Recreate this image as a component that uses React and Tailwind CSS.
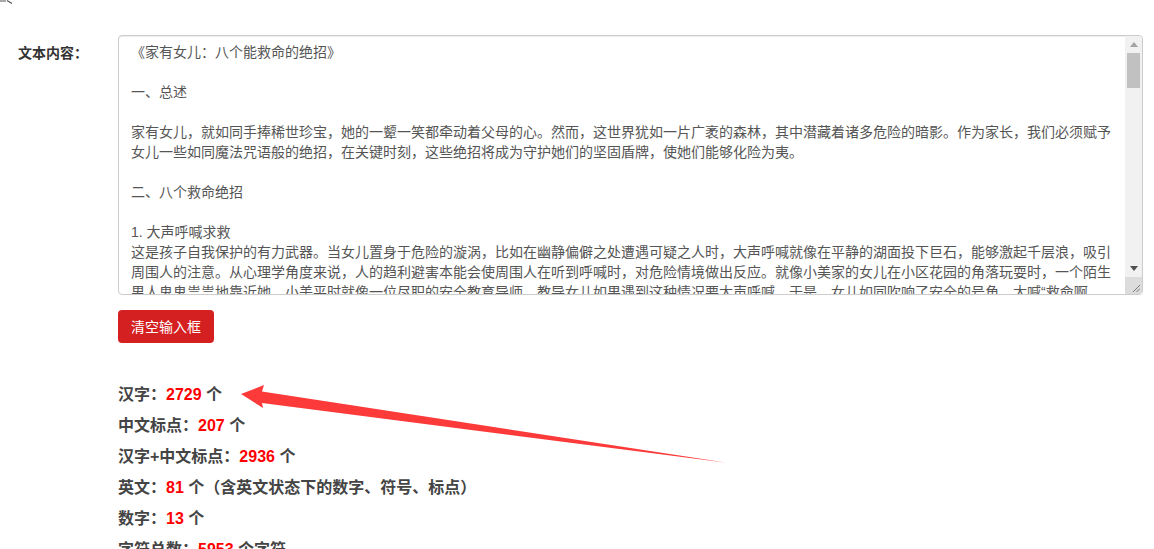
import React from "react";

const textLines = [
  "《家有女儿：八个能救命的绝招》",
  "",
  "一、总述",
  "",
  "家有女儿，就如同手捧稀世珍宝，她的一颦一笑都牵动着父母的心。然而，这世界犹如一片广袤的森林，其中潜藏着诸多危险的暗影。作为家长，我们必须赋予",
  "女儿一些如同魔法咒语般的绝招，在关键时刻，这些绝招将成为守护她们的坚固盾牌，使她们能够化险为夷。",
  "",
  "二、八个救命绝招",
  "",
  "1. 大声呼喊求救",
  "这是孩子自我保护的有力武器。当女儿置身于危险的漩涡，比如在幽静偏僻之处遭遇可疑之人时，大声呼喊就像在平静的湖面投下巨石，能够激起千层浪，吸引",
  "周围人的注意。从心理学角度来说，人的趋利避害本能会使周围人在听到呼喊时，对危险情境做出反应。就像小美家的女儿在小区花园的角落玩耍时，一个陌生",
  "男人鬼鬼祟祟地靠近她。小美平时就像一位尽职的安全教育导师，教导女儿如果遇到这种情况要大声呼喊。于是，女儿如同吹响了安全的号角，大喊“救命啊",
];

const stats = [
  ["汉字：", "2729", " 个"],
  ["中文标点：", "207", " 个"],
  ["汉字+中文标点：", "2936", " 个"],
  ["英文：", "81", " 个（含英文状态下的数字、符号、标点）"],
  ["数字：", "13", " 个"],
  ["字符总数：", "5953", " 个字符"],
];

export default function App() {
  return (
    <div
      className="relative w-[1154px] h-[549px] overflow-hidden bg-white"
      style={{ fontFamily: '"Liberation Sans", "Noto Sans CJK SC", sans-serif' }}
    >
      <svg className="absolute left-0 top-0" width="14" height="6" viewBox="0 0 14 6">
        <path d="M0 1 L6 1 M7 0.5 L12 3.5" stroke="#555" strokeWidth="1.2" fill="none" />
      </svg>

      <div className="flex flex-col pl-[18px] pt-[35px]">
        <div className="flex items-start">
          <div className="w-[100px] pt-[8px] text-[14px] leading-[20px] font-bold text-[#333]">
            文本内容：
          </div>
          <div className="flex flex-col">
            <div className="flex w-[1025px] h-[260px] border border-[#ccc] rounded-[4px] overflow-hidden bg-white shadow-[inset_0_1px_1px_rgba(0,0,0,0.075)]">
              <div className="flex-1 overflow-hidden whitespace-nowrap px-[12px] pt-[6px] text-[14px] leading-[20px] text-[#555]">
                {textLines.map((l, i) => (
                  <div key={i} className="h-[20px]">
                    {l}
                  </div>
                ))}
              </div>
              <div className="flex flex-col w-[17px] bg-[#f1f1f1]">
                <div className="h-[17px] flex items-center justify-center">
                  <svg width="8" height="5" viewBox="0 0 8 5">
                    <path d="M0 5 L4 0 L8 5 Z" fill="#a3a3a3" />
                  </svg>
                </div>
                <div className="flex-1 flex flex-col items-center">
                  <div className="w-[13px] h-[35px] bg-[#c1c1c1]" />
                </div>
                <div className="h-[17px] flex items-center justify-center">
                  <svg width="8" height="5" viewBox="0 0 8 5">
                    <path d="M0 0 L8 0 L4 5 Z" fill="#505050" />
                  </svg>
                </div>
                <div className="h-[17px] bg-[#dcdcdc] flex items-end justify-end pr-[2px] pb-[2px]">
                  <svg width="8" height="8" viewBox="0 0 8 8">
                    <path d="M1 8 L8 1 M4.5 8 L8 4.5" stroke="#7a7a7a" strokeWidth="1" fill="none" />
                  </svg>
                </div>
              </div>
            </div>
            <button className="mt-[15px] w-[96px] h-[33px] rounded-[4px] bg-[#d42020] text-white text-[14px] leading-[20px]">
              清空输入框
            </button>
          </div>
        </div>

        <div className="flex flex-col pl-[100px] mt-[36px]">
          {stats.map(([a, b, c], i) => (
            <div key={i} className="h-[31px] leading-[31px] text-[16px] font-bold text-[#444] whitespace-nowrap">
              {a}
              <span className="text-[#ff0000]">{b}</span>
              {c}
            </div>
          ))}
        </div>
      </div>

      <svg className="absolute left-0 top-0 pointer-events-none" width="1154" height="549" viewBox="0 0 1154 549">
        <path
          d="M241 394 L264 385 L262 391.5 L727 462.8 L262 403 L263 408 Z"
          fill="#fd3a3a"
        />
      </svg>
    </div>
  );
}
